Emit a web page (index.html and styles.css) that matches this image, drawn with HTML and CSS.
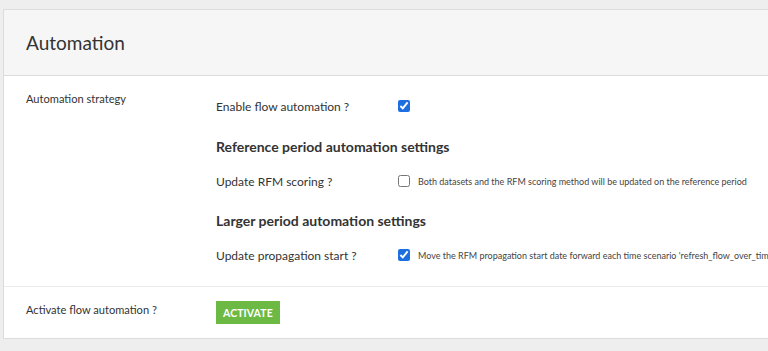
FILE: index.html
```html
<!DOCTYPE html>
<html lang="en">

<head>
  <meta charset="UTF-8">
  <meta name="viewport" content="width=device-width, initial-scale=1.0">
  <title>Automation</title>
  <link rel="stylesheet" href="styles.css">
</head>

<body>

  <div class="panel">
    <div class="panel-header">
      <h2>Automation</h2>
    </div>

    <!-- Strategy -->
    <div class="panel-row">
      <div class="row-label">Automation strategy</div>
      <div class="row-content">
        <div class="field">
          <span class="field-label">Enable flow automation ?</span>
          <input type="checkbox" checked>
        </div>

        <h3>Reference period automation settings</h3>
        <div class="field">
          <span class="field-label">Update RFM scoring ?</span>
          <input type="checkbox">
          <span class="field-help">Both datasets and the RFM scoring method will be updated on the reference period</span>
        </div>

        <h3>Larger period automation settings</h3>
        <div class="field">
          <span class="field-label">Update propagation start ?</span>
          <input type="checkbox" checked>
          <span class="field-help">Move the RFM propagation start date forward each time scenario 'refresh_flow_over_time' is run</span>
        </div>
      </div>
    </div>

    <!-- Activate -->
    <div class="panel-row last">
      <div class="row-label">Activate flow automation ?</div>
      <div class="row-content">
        <button class="activate-btn">ACTIVATE</button>
      </div>
    </div>
  </div>

</body>

</html>
```

FILE: styles.css
```css
/* Global Styles */
* {
  margin: 0;
  padding: 0;
  box-sizing: border-box;
  font-family: 'Lato', sans-serif;
}

html, body {
  overflow: hidden;
}

body {
  background: #eeeeee;
  color: #333;
  padding: 9px 0 0 3px;
}

/* Panel */
.panel {
  width: calc(100% + 40px);
  background: #fff;
  border: 1px solid #dcdcdc;
}

.panel-header {
  height: 66px;
  background: #f6f6f6;
  border-bottom: 1px solid #dcdcdc;
  padding-left: 22px;
  display: flex;
  align-items: center;
}

h2 {
  font-size: 19px;
  font-weight: 400;
  color: #333;
}

/* Rows */
.panel-row {
  display: flex;
  padding: 15px 0 16px 22px;
  border-bottom: 1px solid #ececec;
}

.panel-row.last {
  border-bottom: none;
  padding: 14px 0 14px 22px;
}

.row-label {
  width: 190px;
  font-size: 11.1px;
  line-height: 16px;
  flex-shrink: 0;
}

.panel-row.last .row-label {
  padding-top: 1px;
}

.row-content {
  display: flex;
  flex-direction: column;
  align-items: flex-start;
}

.field {
  height: 30px;
  display: flex;
  align-items: center;
  white-space: nowrap;
}

.field-label {
  width: 182px;
  font-size: 12px;
}

.field input {
  width: 12px;
  height: 12px;
  margin: 0;
  accent-color: #1d6fe0;
}

.field-help {
  font-size: 9px;
  margin-left: 8px;
  color: #444;
}

h3 {
  font-size: 14px;
  font-weight: 700;
  line-height: 20px;
  margin: 16px 0 9px;
  color: #333;
}

h3 + .field + h3 {
  margin-top: 15px;
}

.activate-btn {
  background: #6cb944;
  color: #fff;
  border: none;
  height: 23px;
  padding: 0 7px;
  font-size: 10.5px;
  font-weight: 700;
  letter-spacing: 0.1px;
}
```
